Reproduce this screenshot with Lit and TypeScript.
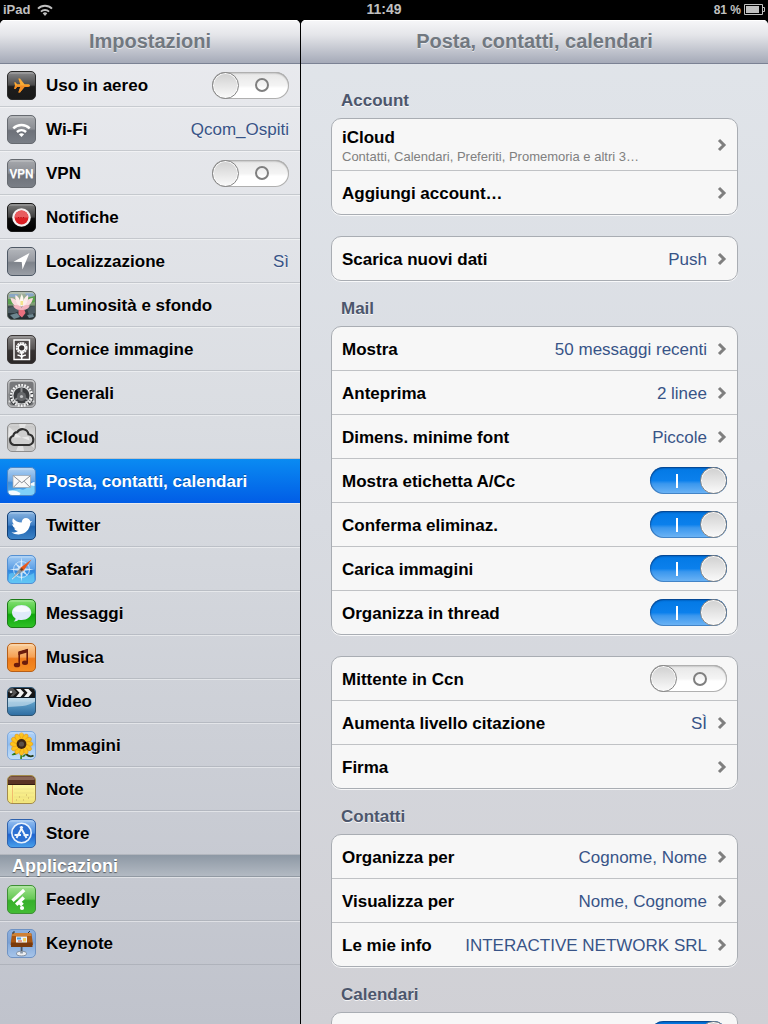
import { LitElement, html, svg, css, nothing } from "lit";
import type { SVGTemplateResult } from "lit";
import { customElement, property } from "lit/decorators.js";
import { classMap } from "lit/directives/class-map.js";

type Art = { stops: string[]; edge: string; body: SVGTemplateResult; gloss?: number };

// Artwork for each 29 x 29 tile; the stops run from top to bottom.
const ART: Record<string, Art> = {
  plane: {
    stops: ["#8d8d8f", "#4b4b4c", "#1d1d1d", "#191919"], edge: "#2c2c2c",
    body: svg`<path fill="#fbab35" d="M23 14.6c0-.8-1-1.300-2.200-1.300h-3.300L13 7.600h-1.700l2 5.700h-3.200l-1.600-2H7.200l.8 3.300-.8 3.300h1.300l1.600-2h3.200l-2 5.700H13l4.500-5.700h3.300c1.200 0 2.200-.5 2.200-1.300z"/>
      <path fill="#f08020" d="M8 14.600h15c0 .8-1 1.300-2.200 1.300h-3.300L13 21.600h-1.700l2-5.700h-3.200l-1.600 2H7.200z" opacity=".7"/>`,
  },
  wifi: {
    stops: ["#a9abaf", "#8b8e94", "#6d7179", "#7a7f87"], edge: "#666a70",
    body: svg`<g fill="none" stroke="#fff" stroke-width="2.5"><path d="M6.300 13.300a11.800 11.800 0 0 1 16.400 0"/><path d="M9.900 17a6.900 6.900 0 0 1 9.200 0"/></g>
      <path fill="#fff" d="M11.900 19.300a3.900 3.900 0 0 1 5.200 0L14.500 22z"/>`,
  },
  vpn: {
    stops: ["#a9abaf", "#8b8e94", "#6d7179", "#7a7f87"], edge: "#666a70",
    body: svg`<text x="14.5" y="19" text-anchor="middle" font-family="Roboto, Liberation Sans, sans-serif" font-weight="500" font-size="12" fill="#fff">VPN</text>`,
  },
  bell: {
    stops: ["#808080", "#3f3f3f", "#0d0d0d", "#000"], edge: "#1a1a1a",
    body: svg`<circle cx="14.500" cy="14.500" r="9.300" fill="#f4f1f1"/><circle cx="14.500" cy="14.500" r="6.900" fill="#dc1f24"/>
      <path d="M7.600 14.500a6.900 6.900 0 0 1 13.800 0z" fill="#e85c5f"/><path d="M11 14.500h7" stroke="#b01016" stroke-dasharray="1 1.500"/>`,
  },
  location: {
    stops: ["#b7babf", "#989ba2", "#7e838b", "#9da1a8"], edge: "#4f5966",
    body: svg`<path fill="#fff" d="M22.500 6 6.500 14.800l8.200.2.800 7.500z"/>`,
  },
  lotus: {
    stops: ["#aab6a8", "#7c9a72", "#39464a", "#20292e"], edge: "#5d6660",
    body: svg`<path fill="#5aa04f" d="M1 8h8l3 2-4 3H1zM19 7l9-2v6l-7 2z"/><path fill="#8aa7c4" d="M3 3h9l-3 3H2zM18 2h8l1 3-7 1z"/>
      <path fill="#4d5c63" d="M1 17l8-2 5 4-6 3H1zM20 17l8-2v7l-6 2z"/><path fill="#6d8790" d="M3 24l7-2 3 4-6 2zM20 24l6-1 1 3-5 1z"/>
      <path fill="#f8d9dd" d="M3.500 7c5 .5 8 3.500 10 9-5 0-9-3-10-9zM26 7c-5 .5-8 3.500-10 9 5 0 9-3 10-9z"/>
      <path fill="#fdecea" d="M8.500 4c4 2.500 5.500 6 5.500 12-4-2-6.500-7-5.500-12zM21 4c-4 2.500-5.500 6-5.500 12 4-2 6.500-7 5.500-12z"/>
      <path fill="#fff8ee" d="M14.800 3c2.600 4.500 2.600 9 0 13.500-2.600-4.500-2.600-9 0-13.500z"/><path fill="#f3e38c" d="M13.500 10h2.600v4h-2.600z"/>
      <path fill="#f3b4bf" d="M6 14.500c4-1.500 6.500 0 8.500 2 2-2 4.500-3.500 8.500-2-2 4-5 5-8.500 4.500-3.500.5-6.500-.5-8.500-4.500z"/><path fill="#e8707f" d="M11.500 19h6l1 3-3.500 4.500-3.500-3z"/>`,
  },
  frame: {
    stops: ["#868484", "#565353", "#363232", "#2b2727"], edge: "#3b3737",
    body: svg`<path d="M7 5h15.500v19.500H7z" fill="#4a4545" stroke="#fff" stroke-width="1.400"/>
      <circle cx="14.700" cy="12.800" r="4.600" fill="none" stroke="#f2f2f2" stroke-width="2.600" stroke-dasharray="1.900 .5"/><circle cx="14.700" cy="12.800" r="3.300" fill="#3a3636" stroke="#fff" stroke-width="1.300"/>
      <path d="M14.700 17v7M10.500 20.300c2.400-.4 3.600.6 4.200 2.200.6-1.600 1.800-2.600 4.200-2.200" fill="none" stroke="#fff" stroke-width="1.500"/>`,
  },
  gear: {
    stops: ["#c3c4c6", "#a0a1a3", "#8b8c8e", "#b4b5b7"], edge: "#808184",
    body: svg`<rect x="2.500" y="2.500" width="24" height="24" rx="3" fill="#77787b"/><path d="M3 14h23v8l-3 4H6l-3-4z" fill="#3b3d40"/>
      <circle cx="14.500" cy="16.500" r="10.300" fill="none" stroke="#f4f4f4" stroke-width="2.600" stroke-dasharray="1.700 1.300"/>
      <circle cx="14.500" cy="16.500" r="8.700" fill="#3b3d40" stroke="#dcdddf" stroke-width="1.300"/>
      <path d="M14.500 17V9M14.500 17l-7 4M14.500 17l7 4" stroke="#8a8c8f" stroke-width="2"/>
      <circle cx="14.500" cy="17.500" r="4.600" fill="#66686b"/><circle cx="14.500" cy="17.500" r="1.600" fill="#c3c4c6"/>
      <path d="M2 23c4-2.500 8-1.500 10 4M27 23c-4-2.500-8-1.500-10 4" fill="none" stroke="#dcdddd" stroke-width="2" stroke-dasharray="1.500 1"/>`,
  },
  cloud: {
    stops: ["#c2c2c2", "#dcdcdc", "#b3b3b3", "#c9c9c9"], edge: "#8e8e8e",
    body: svg`<path d="M14.500 14.500 2 4v9zM14.500 14.500 27 25V15zM14.500 14.500 12 1h7zM14.500 14.500 9 28h8z" fill="#f3f3f3" opacity=".6"/>
      <path d="M7.800 21.300a4.400 4.400 0 0 1-.8-8.500 3.500 3.500 0 0 1 3.600-3.200 5.500 5.500 0 0 1 10.200 1.900 5 5 0 0 1 .6 9.800z" fill="#cfcfcf" stroke="#303030" stroke-width="1.900" transform="translate(-1.400 -1.400) scale(1.100)"/>
      <path d="M14.500 14.500 9 10.500l-2 4zM14.500 14.500l7-1 1 4z" fill="#f5f5f5" opacity=".7"/>`,
  },
  mail: {
    stops: ["#b4d3f2", "#6aa6e4", "#3e8ddd", "#55b3f1"], edge: "#4c87c6",
    body: svg`<path d="M1.500 23c6 1 8-2 13-.5 4 1 8-4 13-8V25q0 3-3 3H4q-2.500 0-2.500-3z" fill="#7fd0f8"/><path d="M1.500 24c6-1.500 9 .5 12 2l-1 2H4q-2.500 0-2.500-2zM22 18c2-2 4-3 5.500-3v4z" fill="#f4fbff"/>
      <rect x="6" y="8.500" width="17.500" height="12" fill="#f8f8f8" stroke="#9aa3ad" stroke-width=".7"/><path d="m6.300 8.800 8.500 7 8.500-7M6.500 20.200l6-6M23 20.200l-6-6" fill="none" stroke="#8b8f95"/>`,
  },
  bird: {
    stops: ["#8fb8e3", "#3f7fc5", "#1e62ae", "#3f86c9"], edge: "#133f74",
    body: svg`<path fill="#fff" d="M25.500 9.800c-.8.4-1.500.6-2.100.6C22.800 8.300 21.200 7 19 7c-2.500 0-4.300 1.900-4.300 4.600-3.500 0-6.500-1.600-8.700-4.300-1.200 2.200-.7 4.700 1.100 6.200-.6 0-1.200-.2-1.800-.5.1 2.200 1.400 3.700 3.400 4.300l-1.600.2c.7 1.500 2 2.300 3.800 2.500-1.900 1.200-4 1.800-6.500 1.500 2.300 1.400 4.700 2 7.400 1.900 6.700-.1 11-4.700 11.500-11.300z"/>`,
  },
  compass: {
    stops: ["#a5cdf4", "#5c9fe6", "#2f86df", "#5cc3f4"], edge: "#5490d2",
    body: svg`<path d="M2 19c5-3 8 1 11 2s9 0 14-3v7q0 3-3 3H5q-3 0-3-3z" fill="#64c8f5" opacity=".7"/><circle cx="14.500" cy="14.500" r="8" fill="none" stroke="#d6ebfc" stroke-width=".8"/>
      <path d="m14.500 2 1.200 9.500L21 8l-3.500 5.300L27 14.500l-9.500 1.300L21 21l-5.300-3.500-1.200 9.500-1.200-9.500L8 21l3.500-5.200L2 14.500l9.500-1.200L8 8l5.300 3.500z" fill="#e6f3fd" opacity=".85"/>
      <path d="M24.500 4.500 16.300 16l-3.200-3z" fill="#e8591a"/><path d="M4.800 24.300 13.100 13l3.200 3z" fill="#8a959f"/><path d="m5 24.200 6.500-5.800" stroke="#e4eef6"/><circle cx="14.600" cy="14.500" r="1.300" fill="#6c3b22"/>`,
  },
  bubble: {
    stops: ["#8be37a", "#3cc42f", "#0ea60c", "#31c328"], edge: "#1c7a18",
    body: svg`<path d="M14.600 6c5.500 0 9.700 3.200 9.700 7.500S20.100 21 14.600 21c-1 0-2-.1-3-.3-1.300 1.200-2.800 1.800-5 1.700 1.300-.9 1.900-1.800 2-2.900C6.300 18.200 5 16 5 13.500 5 9.200 9.100 6 14.600 6z" fill="#dfeafa"/>
      <path d="M14.600 7c4.500 0 8 2 8.500 5-3 1.500-14 1.500-17 0 .5-3 4-5 8.500-5z" fill="#fff" opacity=".7"/>`,
  },
  note: {
    stops: ["#fad2a0", "#f6a154", "#ee7a1b", "#f58e22"], edge: "#b75f18",
    body: svg`<path d="M12.200 21V9.700l8-2.500V19" fill="none" stroke="#6b1c0c" stroke-width="1.600"/><path d="m11.400 8.500 9.600-2.800v3.500L11.400 12z" fill="#6b1c0c"/><ellipse cx="10" cy="22" rx="3.200" ry="2.300" fill="#6b1c0c"/><ellipse cx="18" cy="19.800" rx="3" ry="2.200" fill="#6b1c0c"/>`,
  },
  clapper: {
    stops: ["#cfe2ee", "#8fbad5", "#5f9fc8", "#2d6ba0"], edge: "#2f5573", gloss: 0,
    body: svg`<path d="M28 10.500v4C20 20 12 19 1 20v-9.500z" fill="#d5e8f3" opacity=".6"/>
      <path d="M1 5q0-4 4-4h19q4 0 4 4v5.500H1z" fill="#161616"/><path d="M1 5q0-4 4-4h1l4 4.500-4 4H3L6 6z" fill="#555"/>
      <path d="M9 2h4.500l3.500 3.700-3.500 4.300H9l3.500-4.300zM17 2h4.500L25 5.700 21.500 10H17l3.500-4.300z" fill="#f2f2f2"/><circle cx="4" cy="5" r="1.200" fill="#ddd"/><path d="M1 10.500h27" stroke="#0c1a26"/>`,
  },
  sunflower: {
    stops: ["#b5d5f8", "#8dbcf0", "#9fc8f4", "#c7e0f8"], edge: "#7fa9dc",
    body: svg`<path d="M14 20c.5 3 .5 5 0 8" stroke="#3f8a1d" stroke-width="1.800"/><path d="M4.500 24c2-2.500 4.500-3 6-1.500-1.500 1.500-3.500 2-6 1.500zM15 26c1-2 2.500-3 4-3-.5 2-2 3.500-4 3z" fill="#2d7a1a"/><path d="M19 23c2 2 5 3 7.500 1.500" stroke="#243a18" stroke-width="1.800" fill="none"/>
      <g fill="#fbc21d" stroke="#e58f12" stroke-width=".5">${[0, 30, 60, 90, 120, 150, 180, 210, 240, 270, 300, 330].map((a) => svg`<ellipse cx="14.500" cy="6" rx="2.400" ry="4.300" transform="rotate(${a} 14.500 13)"/>`)}</g>
      <circle cx="14.500" cy="13" r="4.900" fill="#3a2413"/><circle cx="14.500" cy="13" r="2.600" fill="#5c5148"/>`,
  },
  pad: {
    stops: ["#fdf7a8", "#fbf39b", "#f9ef8d", "#f3e679"], edge: "#a28b4c", gloss: 0,
    body: svg`<path d="M1 5q0-4 4-4h19q4 0 4 4v4.500H1z" fill="#5a3324"/><path d="M1.500 5q0-3.500 3.500-3.500h19q3.500 0 3.500 3.500z" fill="#8a6657"/><path d="M1 9.500h27" stroke="#321a10"/><path d="M5.500 10v18" stroke="#efb56b" stroke-width=".9"/>
      <path d="M7 14h20M7 18h20M7 22h20M7 26h20" stroke="#e3d782" stroke-width=".5"/><path d="M19 20h1M9 25h1M16 25h1M21 23h1M12 22h1" stroke="#c7a95e"/>`,
  },
  store: {
    stops: ["#9cc4f2", "#4b8ce0", "#1f62cf", "#4ba4ec"], edge: "#2f62ad",
    body: svg`<circle cx="14.500" cy="14" r="9.700" fill="#2d70d2" stroke="#eaf3fd" stroke-width="1.600"/><path d="m15.500 7.500-6 11.500M13.300 7.500 19.500 19M7.500 16h6.500M16.500 16h5" fill="none" stroke="#f2f7fd" stroke-width="1.900"/>`,
  },
  feedly: {
    stops: ["#a5e394", "#66c955", "#37b02b", "#43bd34"], edge: "#3e8f35",
    body: svg`<g stroke="#fff" stroke-width="3.400"><path d="M5.500 15.700 17.200 5"/><path d="m9.200 19.800 7.600-7.300"/></g><path d="m12.800 20.200 2.700-2.700" stroke="#fff" stroke-width="3.600"/><circle cx="15" cy="23" r="2.100" fill="#fff"/>`,
  },
  podium: {
    stops: ["#8fb2df", "#7ba0d3", "#86abdb", "#a9c6ea"], edge: "#6f93c4", gloss: 0,
    body: svg`<path d="M5 4.500h19.500L26 16H3.500z" fill="#a85713"/><path d="M5.500 4h18.500l.5 3H5z" fill="#cf8134"/><path d="M4 13.500h21.500V18H4z" fill="#7a3a0c"/><path d="M6 5V3h2M21 4l2-2" stroke="#333" fill="none"/>
      <path d="M9 7.500h11v6H9z" fill="#e9f3fb"/><path d="M10 8.500h4v2h-4z" fill="#4a9be0"/><path d="M11 11.500h4v1h-4z" fill="#e04b2a"/><path d="M16 9h3v3.500h-3z" fill="#f5cf5c"/>
      <path d="M13.700 18h1.800v6h-1.800z" fill="#4a5562"/><ellipse cx="14.500" cy="24.600" rx="5" ry="2.300" fill="#eceff3" stroke="#66717f" stroke-width=".7"/><path d="M13.200 22h2.700v2.500h-2.700z" fill="#8b97a6"/>`,
  },
};

const tile = (name: string) => {
  const a = ART[name];
  return html`<svg class="tile" viewBox="0 0 29 29" aria-hidden="true">
    <defs>
      <linearGradient id="g-${name}" x2="0" y2="1">
        <stop offset="0" stop-color=${a.stops[0]} /><stop offset=".48" stop-color=${a.stops[1]} />
        <stop offset=".54" stop-color=${a.stops[2]} /><stop offset="1" stop-color=${a.stops[3]} />
      </linearGradient>
      <clipPath id="c-${name}"><rect x=".5" y=".5" width="28" height="28" rx="4.5" /></clipPath>
    </defs>
    <g clip-path="url(#c-${name})">
      <rect width="29" height="29" fill="url(#g-${name})" />
      ${a.body}
      <path d="M1 2h27" stroke="#fff" stroke-opacity=${a.gloss ?? 0.35} />
    </g>
    <rect x=".5" y=".5" width="28" height="28" rx="4.5" fill="none" stroke=${a.edge} />
  </svg>`;
};

const reset = css`
  * { box-sizing: border-box; }
  ul { list-style: none; margin: 0; padding: 0; }
  h1, h2 { margin: 0; }
  a, label { color: inherit; text-decoration: none; }
`;

@customElement("ios-switch")
class IosSwitch extends LitElement {
  @property({ type: Boolean }) on = false;
  @property() name = "";

  static styles = css`
    :host { display: block; flex: none; }
    .switch, .switch::before, .switch::after { box-sizing: border-box; }
    .switch {
      appearance: none; display: flex; align-items: center; width: 77px; height: 27px; margin: 0;
      border-radius: 14px; background: linear-gradient(#e6e6e6, #f4f4f4 50%, #fff 60%, #fff);
      box-shadow: inset 0 0 0 1px #b0b0b0, inset 0 1px 2px rgba(0, 0, 0, 0.4);
    }
    .switch::before {
      content: ""; flex: none; width: 27px; height: 27px; border: 1px solid #858585; border-radius: 50%;
      background: linear-gradient(#d0d0d0, #fafafa); box-shadow: inset 0 0 0 1px #fafafa;
    }
    .switch::after {
      content: ""; width: 14px; height: 14px; margin: 0 20px 0 auto; border: 2px solid #7f7f7f; border-radius: 50%;
    }
    .switch:checked {
      flex-direction: row-reverse; background: linear-gradient(#0278e4, #0b80ec 50%, #3a97ee 62%, #6fb5f5);
      box-shadow: inset 0 0 0 1px rgba(10, 70, 140, 0.4), inset 0 1px 2px rgba(0, 20, 70, 0.6);
    }
    .switch:checked::after { width: 2px; margin: 0 auto 0 26px; border: 0; border-radius: 0; background: #fff; }
  `;

  render() {
    return html`<input class="switch" type="checkbox" role="switch" aria-label=${this.name} .checked=${this.on} />`;
  }
}

type Item = { label: string; icon: string; value?: string; toggle?: boolean; current?: boolean };

const MENU: Item[] = [
  { label: "Uso in aereo", icon: "plane", toggle: true },
  { label: "Wi-Fi", icon: "wifi", value: "Qcom_Ospiti" },
  { label: "VPN", icon: "vpn", toggle: true },
  { label: "Notifiche", icon: "bell" },
  { label: "Localizzazione", icon: "location", value: "Sì" },
  { label: "Luminosità e sfondo", icon: "lotus" },
  { label: "Cornice immagine", icon: "frame" },
  { label: "Generali", icon: "gear" },
  { label: "iCloud", icon: "cloud" },
  { label: "Posta, contatti, calendari", icon: "mail", current: true },
  { label: "Twitter", icon: "bird" },
  { label: "Safari", icon: "compass" },
  { label: "Messaggi", icon: "bubble" },
  { label: "Musica", icon: "note" },
  { label: "Video", icon: "clapper" },
  { label: "Immagini", icon: "sunflower" },
  { label: "Note", icon: "pad" },
  { label: "Store", icon: "store" },
];

const APPS: Item[] = [
  { label: "Feedly", icon: "feedly" },
  { label: "Keynote", icon: "podium" },
];

@customElement("settings-menu")
class SettingsMenu extends LitElement {
  static styles = [reset, css`
    :host { display: block; }
    .row {
      display: flex; align-items: center; height: 44px; padding: 0 11px 0 7px;
      border-top: 1px solid rgba(255, 255, 255, 0.45); border-bottom: 1px solid rgba(130, 135, 145, 0.3);
      color: #000; text-shadow: 0 1px 0 rgba(255, 255, 255, 0.5);
    }
    .tile { flex: none; width: 29px; height: 29px; margin-right: 10px; }
    .label, .value { padding-top: 2px; line-height: 20px; white-space: nowrap; }
    .label { flex: 1; font-weight: bold; }
    .value { color: #385487; }
    .current {
      border-color: transparent; color: #fff; background: linear-gradient(#0a8bf2, #015de6) border-box;
      text-shadow: 0 -1px 0 rgba(0, 0, 0, 0.3);
    }
    .section {
      height: 22px; padding-left: 12px; border-bottom: 1px solid #929aa3; color: #fff; font-size: 18px; line-height: 22px;
      background: linear-gradient(#8d98a4, #b3bac3); text-shadow: 0 1px 1px rgba(0, 0, 0, 0.5);
    }
  `];

  row(i: Item) {
    const body = html`${tile(i.icon)}<span class="label">${i.label}</span>
      ${i.value ? html`<span class="value">${i.value}</span>` : nothing}
      ${i.toggle ? html`<ios-switch name=${i.label}></ios-switch>` : nothing}`;
    const classes = classMap({ row: true, current: !!i.current });
    return html`<li>${i.toggle ? html`<div class=${classes}>${body}</div>` : html`<a class=${classes} href="#">${body}</a>`}</li>`;
  }

  render() {
    return html`<ul>${MENU.map((i) => this.row(i))}</ul>
      <h2 class="section">Applicazioni</h2>
      <ul>${APPS.map((i) => this.row(i))}</ul>`;
  }
}

type Setting = { label: string; value?: string; detail?: string; toggle?: boolean };
type Group = { title?: string; rows: Setting[] };

const GROUPS: Group[] = [
  { title: "Account", rows: [
    { label: "iCloud", detail: "Contatti, Calendari, Preferiti, Promemoria e altri 3…" },
    { label: "Aggiungi account…" },
  ] },
  { rows: [{ label: "Scarica nuovi dati", value: "Push" }] },
  { title: "Mail", rows: [
    { label: "Mostra", value: "50 messaggi recenti" },
    { label: "Anteprima", value: "2 linee" },
    { label: "Dimens. minime font", value: "Piccole" },
    { label: "Mostra etichetta A/Cc", toggle: true },
    { label: "Conferma eliminaz.", toggle: true },
    { label: "Carica immagini", toggle: true },
    { label: "Organizza in thread", toggle: true },
  ] },
  { rows: [
    { label: "Mittente in Ccn", toggle: false },
    { label: "Aumenta livello citazione", value: "SÌ" },
    { label: "Firma" },
  ] },
  { title: "Contatti", rows: [
    { label: "Organizza per", value: "Cognome, Nome" },
    { label: "Visualizza per", value: "Nome, Cognome" },
    { label: "Le mie info", value: "INTERACTIVE NETWORK SRL" },
  ] },
  { title: "Calendari", rows: [{ label: "", toggle: true }] },
];

@customElement("settings-groups")
class SettingsGroups extends LitElement {
  static styles = [reset, css`
    :host { display: block; padding: 10px 30px 21px; }
    .title {
      padding: 17px 10px 6px; color: #4c566c; font-size: 17px; line-height: 22px;
      text-shadow: 0 1px 0 rgba(255, 255, 255, 0.8);
    }
    .group { border: 1px solid #a9adb3; border-radius: 10px; background: #f7f7f7; box-shadow: 0 1px 0 rgba(255, 255, 255, 0.8); }
    .untitled { margin-top: 21px; }
    .item + .item { border-top: 1px solid #c0c2c5; }
    .row { display: flex; align-items: center; min-height: 43px; padding: 0 10px; color: #000; }
    .text, .value { padding-top: 2px; line-height: 20px; white-space: nowrap; }
    .text { flex: 1; display: flex; flex-direction: column; font-weight: bold; }
    .value { color: #385487; }
    .tall { min-height: 51px; }
    .tall .text { padding-top: 4px; }
    .detail { color: #808080; font-size: 13px; font-weight: normal; line-height: 18px; }
    .chevron { flex: none; width: 10px; height: 14px; margin-left: 10px; fill: none; stroke: #7f7f7f; stroke-width: 3; }
  `];

  row(s: Setting, group?: string) {
    const text = html`<span class="text">${s.label}${s.detail ? html`<span class="detail">${s.detail}</span>` : nothing}</span>`;
    if (s.toggle !== undefined) {
      return html`<li class="item"><div class="row">${text}<ios-switch name=${s.label || group || ""} ?on=${s.toggle}></ios-switch></div></li>`;
    }
    return html`<li class="item"><a class=${classMap({ row: true, tall: !!s.detail })} href="#">${text}
      ${s.value ? html`<span class="value">${s.value}</span>` : nothing}
      <svg class="chevron" viewBox="0 0 10 14" aria-hidden="true"><path d="m2 2 5 5-5 5" /></svg></a></li>`;
  }

  render() {
    return GROUPS.map((g) => html`${g.title ? html`<h2 class="title">${g.title}</h2>` : nothing}
      <ul class=${classMap({ group: true, untitled: !g.title })}>${g.rows.map((s) => this.row(s, g.title))}</ul>`);
  }
}

@customElement("app-root")
class AppRoot extends LitElement {
  static styles = [reset, css`
    :host {
      display: flex; flex-direction: column; height: 100vh; overflow: hidden; background: #000;
      font: 17px "Liberation Sans", Arial, sans-serif;
    }
    .status {
      display: grid; grid-template-columns: 1fr auto 1fr; flex: none; height: 20px; padding: 0 3px;
      color: #c0c0c0; font-size: 14px; font-weight: bold; line-height: 18px;
    }
    .side { display: flex; align-items: center; gap: 7px; height: 19px; font-size: 13px; }
    .end { justify-content: flex-end; gap: 3px; font-size: 12px; }
    .signal { width: 16px; height: 12px; }
    .battery { width: 21px; height: 11px; }
    .panes { flex: 1; min-height: 0; display: grid; grid-template-columns: 300px 1fr; gap: 1px; }
    .pane { display: flex; flex-direction: column; min-width: 0; min-height: 0; border-radius: 5px 5px 0 0; overflow: hidden; }
    .list { background: linear-gradient(#eaebef, #dadde2 40%, #c0c3cc); }
    .detail { background: linear-gradient(#e1e5ea, #d8dbe1 50%, #d0d0d5); }
    .bar {
      flex: none; height: 43px; z-index: 1; background: linear-gradient(#f7f7f9, #e4e5e9 35%, #a5aab8);
      box-shadow: 0 1px 0 #7b8294, inset 0 1px 0 #fff;
    }
    .heading {
      color: #717880; font-size: 20px; line-height: 43px; text-align: center; white-space: nowrap;
      text-shadow: 0 1px 0 rgba(255, 255, 255, 0.6);
    }
    .scroll { flex: 1; min-height: 0; overflow-y: auto; scrollbar-width: none; }
  `];

  render() {
    return html`
      <header class="status">
        <span class="side">iPad
          <svg class="signal" viewBox="0 0 16 12" aria-hidden="true"><g fill="none" stroke="#c0c0c0" stroke-width="1.9"><path d="M1 4.600a10 10 0 0 1 14 0" /><path d="M3.900 7.600a6 6 0 0 1 8.200 0" /></g><path d="M5.700 9.300a3.400 3.400 0 0 1 4.600 0L8 12z" fill="#c0c0c0" /></svg>
        </span>
        <span>11:49</span>
        <span class="side end">81 %
          <svg class="battery" viewBox="0 0 21 11" aria-hidden="true"><path d="M.5.5h18v10H.5zM18.500 3.500h2v4h-2" fill="none" stroke="#c0c0c0" /><path d="M2 2h13v7H2z" fill="#c0c0c0" /></svg>
        </span>
      </header>
      <main class="panes">
        <nav class="pane list">
          <div class="bar"><h1 class="heading">Impostazioni</h1></div>
          <div class="scroll"><settings-menu></settings-menu></div>
        </nav>
        <section class="pane detail">
          <div class="bar"><h1 class="heading">Posta, contatti, calendari</h1></div>
          <div class="scroll"><settings-groups></settings-groups></div>
        </section>
      </main>`;
  }
}
